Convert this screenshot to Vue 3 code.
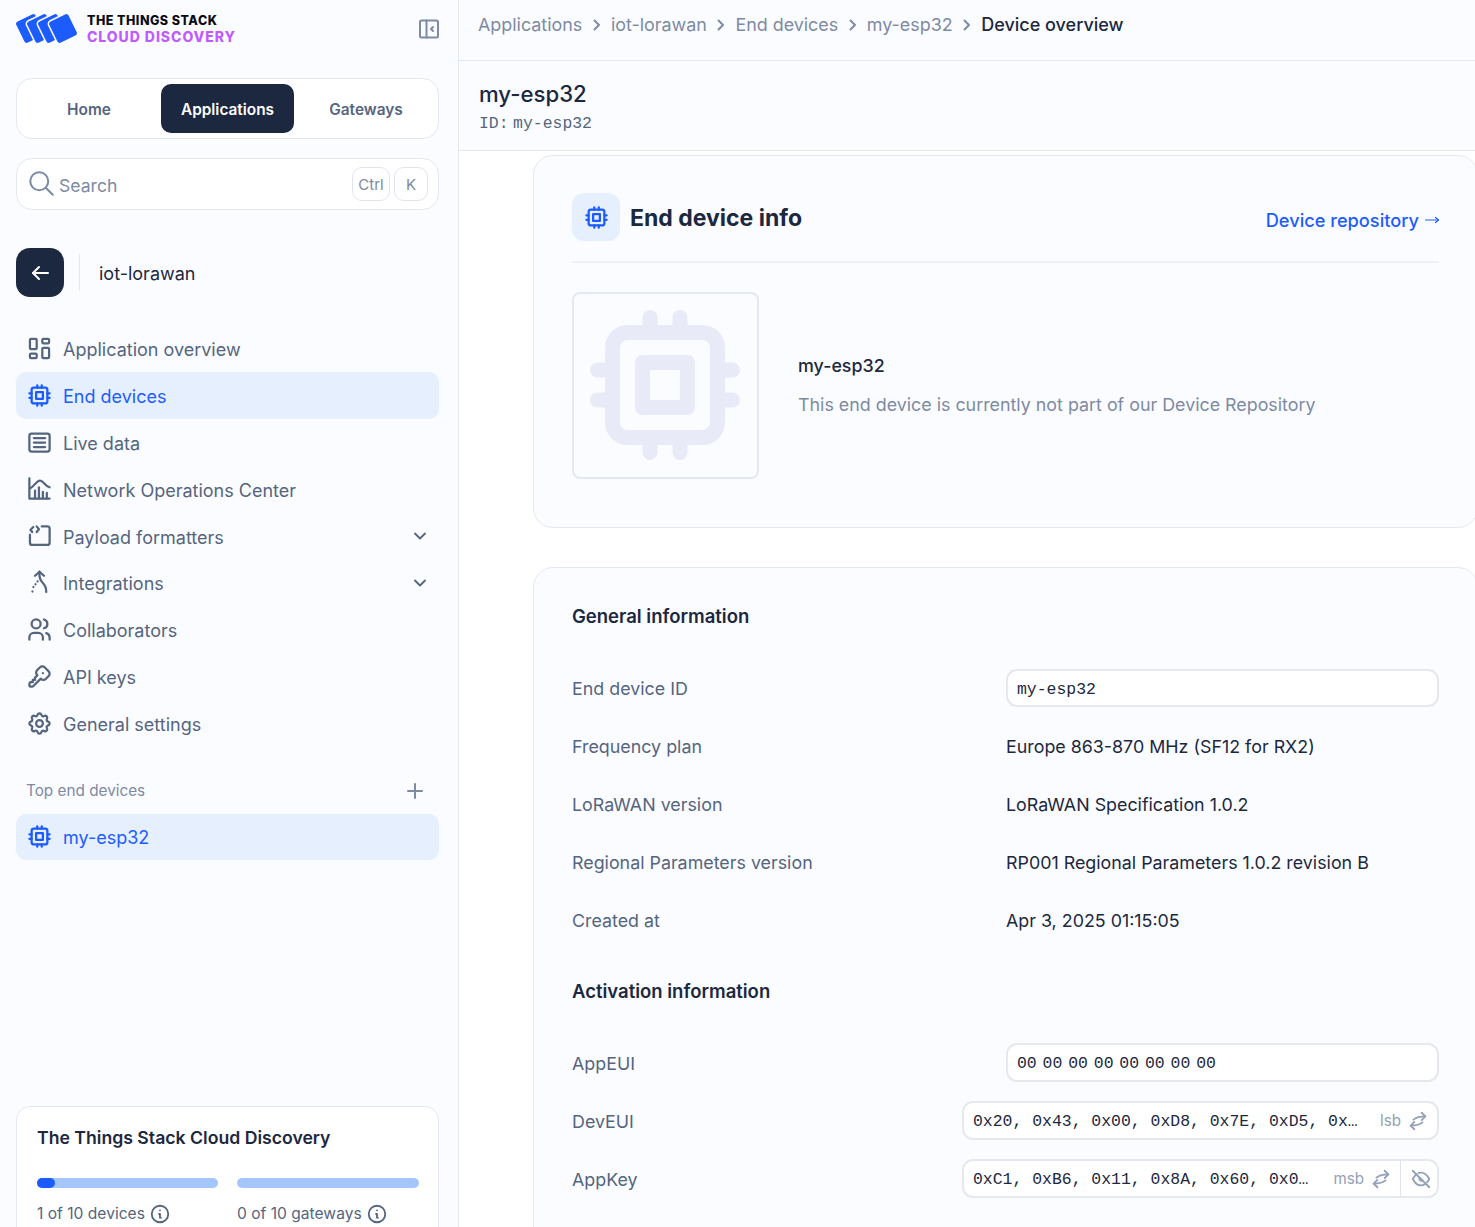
<script setup>
const chip = ['M5 7a2 2 0 0 1 2 -2h10a2 2 0 0 1 2 2v10a2 2 0 0 1 -2 2h-10a2 2 0 0 1 -2 -2z', 'M9 9h6v6h-6z', 'M3 10h2', 'M3 14h2', 'M10 3v2', 'M14 3v2', 'M21 10h-2', 'M21 14h-2', 'M14 21v-2', 'M10 21v-2']

const navItems = [
  { label: 'Application overview', icon: ['M4.500 3.500h4a1 1 0 0 1 1 1v7a1 1 0 0 1 -1 1h-4a1 1 0 0 1 -1 -1v-7a1 1 0 0 1 1 -1', 'M4.500 16.500h4a1 1 0 0 1 1 1v2a1 1 0 0 1 -1 1h-4a1 1 0 0 1 -1 -1v-2a1 1 0 0 1 1 -1', 'M15.500 11.500h4a1 1 0 0 1 1 1v7a1 1 0 0 1 -1 1h-4a1 1 0 0 1 -1 -1v-7a1 1 0 0 1 1 -1', 'M15.500 3.500h4a1 1 0 0 1 1 1v2a1 1 0 0 1 -1 1h-4a1 1 0 0 1 -1 -1v-2a1 1 0 0 1 1 -1'] },
  { label: 'End devices', icon: chip, active: true },
  { label: 'Live data', icon: ['M5 4h14a2 2 0 0 1 2 2v12a2 2 0 0 1 -2 2h-14a2 2 0 0 1 -2 -2v-12a2 2 0 0 1 2 -2', 'M7 8h10', 'M7 12h10', 'M7 16h10'] },
  { label: 'Network Operations Center', icon: ['M3 2v18h18', 'M3.500 11c3.500 -1 5.500 -7 9 -7c3 0 4 5 8.500 6', 'M8 20v-7', 'M11.500 20v-10', 'M15 20v-6', 'M18.500 20v-5'] },
  { label: 'Payload formatters', icon: ['M14 3h5a2 2 0 0 1 2 2v12.500a2 2 0 0 1 -2 2h-13.500a2 2 0 0 1 -2 -2v-7', 'M6.500 3.500l-2.500 2.500l1.500 2', 'M9.500 3l2 2.500l-2 2.500'], chevron: true },
  { label: 'Integrations', icon: ['M12 2.500l-4 3.500', 'M12 2.500l4 3.500', 'M12 3c-.5 5 .5 7 3 9.500c1.500 1.500 3 4 3 8', 'M10.300 11l-.01 .01', 'M8.500 13.500l-.01 .01', 'M6.600 16l-.01 .01', 'M5.700 20l-.01 .01'], chevron: true },
  { label: 'Collaborators', icon: ['M5 7a4 4 0 1 0 8 0a4 4 0 1 0 -8 0', 'M3 21v-2a4 4 0 0 1 4 -4h4a4 4 0 0 1 4 4v2', 'M16 3.130a4 4 0 0 1 0 7.750', 'M21 21v-2a4 4 0 0 0 -3 -3.850'] },
  { label: 'API keys', icon: ['M16.555 3.843l3.602 3.602a2.877 2.877 0 0 1 0 4.069l-2.643 2.643a2.877 2.877 0 0 1 -4.069 0l-.301 -.301l-6.558 6.558a2 2 0 0 1 -1.239 .578l-.175 .008h-1.172a1 1 0 0 1 -.993 -.883l-.007 -.117v-1.172a2 2 0 0 1 .467 -1.284l.119 -.13l.414 -.414h2v-2h2v-2l2.144 -2.144l-.301 -.301a2.877 2.877 0 0 1 0 -4.069l2.643 -2.643a2.877 2.877 0 0 1 4.069 0z', 'M15 9h.01'] },
  { label: 'General settings', icon: ['M10.325 4.317c.426 -1.756 2.924 -1.756 3.35 0a1.724 1.724 0 0 0 2.573 1.066c1.543 -.94 3.31 .826 2.37 2.37a1.724 1.724 0 0 0 1.065 2.572c1.756 .426 1.756 2.924 0 3.35a1.724 1.724 0 0 0 -1.066 2.573c.94 1.543 -.826 3.31 -2.37 2.37a1.724 1.724 0 0 0 -2.572 1.065c-.426 1.756 -2.924 1.756 -3.35 0a1.724 1.724 0 0 0 -2.573 -1.066c-1.543 .94 -3.31 -.826 -2.37 -2.370a1.724 1.724 0 0 0 -1.065 -2.572c-1.756 -.426 -1.756 -2.924 0 -3.35a1.724 1.724 0 0 0 1.066 -2.573c-.94 -1.543 .826 -3.31 2.37 -2.37c1 .608 2.296 .07 2.572 -1.065z', 'M9 12a3 3 0 1 0 6 0a3 3 0 0 0 -6 0'] }
]

const crumbs = ['Applications', 'iot-lorawan', 'End devices', 'my-esp32']

const generalRows = [
  { label: 'Frequency plan', value: 'Europe 863-870 MHz (SF12 for RX2)' },
  { label: 'LoRaWAN version', value: 'LoRaWAN Specification 1.0.2' },
  { label: 'Regional Parameters version', value: 'RP001 Regional Parameters 1.0.2 revision B' },
  { label: 'Created at', value: 'Apr 3, 2025 01:15:05' }
]

const swap = ['M7 10.500c3 -2.500 7 -3.500 13 -3.500', 'M16 3l4 4l-4 4', 'M17 13.500c-3 2.500 -7 3.500 -13 3.500', 'M8 13l-4 4l4 4']
const info = ['M3 12a9 9 0 1 0 18 0a9 9 0 0 0 -18 0', 'M12 8h.01', 'M11 12h1v4h1']
</script>

<template>
  <div class="page">
    <aside class="sidebar">
      <div class="brand">
        <svg class="logo" viewBox="0 0 64 30" width="64" height="30">
          <rect v-for="x in [2.500, 13.500, 24.500, 35.500]" :key="x" :x="x" y="3" width="23" height="25" rx="3.500" fill="#1c5cff" stroke="#fbfcff" stroke-width="1.500" :transform="`rotate(-26 ${x + 11.500} 15.500)`" />
        </svg>
        <div class="brand-text">
          <div class="brand-top">THE THINGS STACK</div>
          <div class="brand-bottom">CLOUD DISCOVERY</div>
        </div>
        <svg class="collapse" viewBox="0 0 20 20" width="20" height="20">
          <rect x="1" y="1.500" width="18" height="17" rx="1.500" />
          <path d="M7.500 1.500v17" />
          <path d="M14 8l-2 2l2 2" />
        </svg>
      </div>

      <div class="tabs">
        <div class="tab tab-home">Home</div>
        <div class="tab tab-active">Applications</div>
        <div class="tab tab-gateways">Gateways</div>
      </div>

      <div class="search">
        <svg viewBox="0 0 24 24" width="27" height="27" class="search-icon">
          <circle cx="10" cy="10" r="8" />
          <path d="M16 16l6 6" />
        </svg>
        <span class="search-text">Search</span>
        <span class="kbd kbd-ctrl">Ctrl</span>
        <span class="kbd kbd-k">K</span>
      </div>

      <div class="back-row">
        <div class="back-btn">
          <svg viewBox="0 0 24 24" width="24" height="24">
            <path d="M20 12h-15" />
            <path d="M11 6l-6 6l6 6" />
          </svg>
        </div>
        <div class="back-sep"></div>
        <span class="back-name">iot-lorawan</span>
      </div>

      <nav class="nav">
        <div v-for="item in navItems" :key="item.label" class="nav-item" :class="{ active: item.active }">
          <svg class="icon" viewBox="0 0 24 24" width="27" height="27">
            <path v-for="d in item.icon" :key="d" :d="d" />
          </svg>
          <span class="nav-label">{{ item.label }}</span>
          <svg v-if="item.chevron" class="chevron" viewBox="0 0 16 16" width="16" height="16">
            <path d="M3 5.500l5 5l5 -5" />
          </svg>
        </div>
      </nav>

      <div class="top-head">
        <span>Top end devices</span>
        <svg viewBox="0 0 18 18" width="18" height="18">
          <path d="M9 2v14M2 9h14" />
        </svg>
      </div>
      <div class="nav-item nav-top active">
        <svg class="icon" viewBox="0 0 24 24" width="27" height="27">
          <path v-for="d in chip" :key="d" :d="d" />
        </svg>
        <span class="nav-label">my-esp32</span>
      </div>

      <div class="usage">
        <h3>The Things Stack Cloud Discovery</h3>
        <div class="usage-grid">
          <div>
            <div class="bar"><div class="bar-fill" style="width: 10%"></div></div>
            <div class="usage-text">1 of 10 devices
              <svg viewBox="0 0 24 24" width="22" height="22"><path v-for="d in info" :key="d" :d="d" /></svg>
            </div>
          </div>
          <div>
            <div class="bar"></div>
            <div class="usage-text">0 of 10 gateways
              <svg viewBox="0 0 24 24" width="22" height="22"><path v-for="d in info" :key="d" :d="d" /></svg>
            </div>
          </div>
        </div>
      </div>
    </aside>

    <main class="main">
      <div class="breadcrumbs">
        <template v-for="c in crumbs" :key="c">
          <span>{{ c }}</span>
          <svg viewBox="0 0 10 12" width="10" height="12"><path d="M2.500 1.500l4.500 4.500l-4.500 4.500" /></svg>
        </template>
        <span class="crumb-current">Device overview</span>
      </div>

      <div class="page-title">
        <h1>my-esp32</h1>
        <div class="page-id">ID: my-esp32</div>
      </div>

      <div class="content">
        <section class="card">
          <div class="card-head">
            <div class="chip-badge">
              <svg class="icon" viewBox="0 0 24 24" width="27" height="27">
                <path v-for="d in chip" :key="d" :d="d" />
              </svg>
            </div>
            <h2>End device info</h2>
            <a class="repo-link">Device repository
              <svg class="arrow" viewBox="0 0 14 10" width="14" height="10">
                <path d="M0.500 5h13" />
                <path d="M10.500 2.500l3 2.500l-3 2.500" />
              </svg>
            </a>
          </div>
          <div class="device-row">
            <div class="device-thumb">
              <svg viewBox="0 0 24 24" width="180" height="180">
                <path v-for="d in chip" :key="d" :d="d" />
              </svg>
            </div>
            <div class="device-copy">
              <div class="device-name">my-esp32</div>
              <div class="device-note">This end device is currently not part of our Device Repository</div>
            </div>
          </div>
        </section>

        <section class="card card-info">
          <h3>General information</h3>
          <div class="rows">
            <div class="row row-input">
              <span class="row-label">End device ID</span>
              <div class="field field-wide"><span class="mono">my-esp32</span></div>
            </div>
            <div v-for="r in generalRows" :key="r.label" class="row row-plain">
              <span class="row-label">{{ r.label }}</span>
              <span class="row-value">{{ r.value }}</span>
            </div>
          </div>

          <h3 class="activation">Activation information</h3>
          <div class="rows rows-activation">
            <div class="row row-input">
              <span class="row-label">AppEUI</span>
              <div class="field field-wide"><span class="mono zeros">00 00 00 00 00 00 00 00</span></div>
            </div>
            <div class="row row-input">
              <span class="row-label">DevEUI</span>
              <div class="field field-long">
                <span class="mono">0x20, 0x43, 0x00, 0xD8, 0x7E, 0xD5, 0x…</span>
                <span class="order">lsb</span>
                <svg class="swap" viewBox="0 0 24 24" width="22" height="22"><path v-for="d in swap" :key="d" :d="d" /></svg>
              </div>
            </div>
            <div class="row row-input">
              <span class="row-label">AppKey</span>
              <div class="field field-long">
                <span class="mono">0xC1, 0xB6, 0x11, 0x8A, 0x60, 0x0…</span>
                <span class="order">msb</span>
                <svg class="swap" viewBox="0 0 24 24" width="22" height="22"><path v-for="d in swap" :key="d" :d="d" /></svg>
                <div class="eye-box">
                  <svg class="swap" viewBox="0 0 24 24" width="22" height="22">
                    <path d="M3 3l18 18" />
                    <path d="M10.600 10.600a2 2 0 0 0 2.800 2.800" />
                    <path d="M9.400 5.400a9.700 9.700 0 0 1 2.600 -.400c3.600 0 6.600 2.300 9 7c-.7 1.400 -1.500 2.600 -2.400 3.600m-2.200 1.900c-1.400 .9 -3 1.500 -4.400 1.500c-3.600 0 -6.600 -2.300 -9 -7c1.200 -2.400 2.600 -4.200 4.300 -5.400" />
                  </svg>
                </div>
              </div>
            </div>
          </div>
        </section>
      </div>
    </main>
  </div>
</template>

<style>
html, body {
  margin: 0;
  background: #fff;
}
</style>

<style scoped>
.page {
  display: flex;
  height: 1227px;
  width: 1475px;
  overflow: hidden;
  font-family: Inter, "Noto Sans", sans-serif;
  font-size: 18px;
  color: #1c2840;
  box-sizing: border-box;
}

svg {
  fill: none;
  stroke: currentColor;
  stroke-width: 2;
  stroke-linecap: round;
  stroke-linejoin: round;
  flex-shrink: 0;
}

.sidebar {
  width: 459px;
  flex-shrink: 0;
  box-sizing: border-box;
  padding: 0 19px 0 16px;
  background: #fbfcff;
  border-right: 1px solid #e4e8f0;
}

.brand {
  display: flex;
  align-items: center;
  height: 58px;
  margin-bottom: 20px;
}

.logo {
  margin-right: 7px;
  margin-top: -2px;
}

.brand-text {
  font-weight: 800;
  line-height: 16px;
  margin-top: -1px;
}

.brand-top {
  font-size: 12.500px;
  color: #0a0a14;
  letter-spacing: 0.480px;
}

.brand-bottom {
  font-size: 14px;
  color: #c05cff;
  letter-spacing: 0.950px;
}

.collapse {
  margin-left: auto;
  color: #7d8aa3;
}

.tabs {
  display: flex;
  align-items: center;
  height: 61px;
  box-sizing: border-box;
  padding: 5px;
  background: #fff;
  border: 1px solid #e4e8f0;
  border-radius: 16px;
  margin-bottom: 19px;
}

.tab {
  font-size: 15.400px;
  font-weight: 600;
  color: #55657f;
  text-align: center;
  line-height: 51px;
  height: 49px;
}

.tab-home {
  width: 134px;
  padding-right: 5px;
}

.tab-active {
  width: 133px;
  background: #1c2840;
  color: #fff;
  border-radius: 10px;
}

.tab-gateways {
  flex: 1;
  padding-left: 5px;
}

.search {
  display: flex;
  align-items: center;
  height: 52px;
  box-sizing: border-box;
  padding: 0 10px 0 11px;
  background: #fff;
  border: 1px solid #e4e8f0;
  border-radius: 16px;
  color: #7d8aa3;
  margin-bottom: 38px;
}

.search-icon {
  stroke-width: 1.800;
  margin-top: -2px;
}

.search-text {
  margin-left: 4px;
  flex: 1;
  font-size: 17.600px;
  padding-top: 2px;
}

.kbd {
  display: flex;
  align-items: center;
  justify-content: center;
  height: 34px;
  box-sizing: border-box;
  border: 1px solid #e0e4ee;
  border-radius: 10px;
  font-size: 15px;
}

.kbd-ctrl {
  width: 38px;
  margin-right: 4px;
}

.kbd-k {
  width: 34px;
}

.back-row {
  display: flex;
  align-items: center;
  height: 49px;
  margin-bottom: 28.500px;
}

.back-btn {
  width: 48px;
  height: 49px;
  border-radius: 14px;
  background: #1c2840;
  color: #fff;
  display: flex;
  align-items: center;
  justify-content: center;
}

.back-sep {
  width: 1px;
  height: 37px;
  background: #e4e8f0;
  margin: 0 19px 0 15px;
}

.back-name {
  padding-top: 1px;
}

.nav-item {
  display: flex;
  align-items: center;
  height: 46.800px;
  box-sizing: border-box;
  padding: 0 11px 0 10px;
  border-radius: 10px;
  color: #55657f;
}

.nav-item .icon {
  margin-right: 10px;
}

.nav-label {
  padding-top: 2px;
}

.nav-item.active {
  background: #e6effe;
  color: #1c5cff;
}

.nav-top {
  height: 46px;
}

.chevron {
  margin-left: auto;
  stroke-width: 1.800;
}

.top-head {
  display: flex;
  align-items: center;
  justify-content: space-between;
  padding: 0 15px 0 10px;
  margin-top: 32px;
  margin-bottom: 11px;
  font-size: 15.300px;
  color: #7d8aa3;
  height: 24px;
}

.usage {
  margin-top: 246px;
  height: 200px;
  box-sizing: border-box;
  padding: 19px 20px;
  background: #fff;
  border: 1px solid #e4e8f0;
  border-radius: 14px;
}

.usage h3 {
  margin: 0 0 28px;
  font-size: 17.650px;
  font-weight: 600;
  line-height: 24px;
}

.usage-grid {
  display: grid;
  grid-template-columns: 181px 182px;
  gap: 19px;
}

.bar {
  height: 10px;
  border-radius: 5px;
  background: #a5c6fd;
}

.bar-fill {
  height: 100%;
  border-radius: 5px;
  background: #1c5cff;
}

.usage-text {
  display: flex;
  align-items: center;
  gap: 4px;
  margin-top: 15px;
  font-size: 15.600px;
  color: #55657f;
  white-space: nowrap;
}

.main {
  flex: 1;
  min-width: 0;
  background: #fff;
}

.breadcrumbs {
  display: flex;
  align-items: center;
  gap: 9.300px;
  height: 61px;
  box-sizing: border-box;
  padding: 0 0 11px 19px;
  background: #fbfcff;
  border-bottom: 1px solid #e4e8f0;
  color: #7d8aa3;
  font-size: 17.900px;
}

.crumb-current {
  color: #1c2840;
  font-weight: 500;
  font-size: 18px;
}

.page-title {
  box-sizing: border-box;
  height: 90px;
  padding: 19px 0 0 20px;
  background: #fbfcff;
  border-bottom: 1px solid #e4e8f0;
}

.page-title h1 {
  margin: 0;
  font-size: 22.200px;
  font-weight: 500;
  line-height: 28px;
}

.page-id {
  font-family: "Liberation Mono", monospace;
  font-size: 16.450px;
  line-height: 18px;
  color: #55657f;
  margin-top: 7px;
  word-spacing: -5.400px;
}

.content {
  padding: 4px 0 0 74px;
  width: 945px;
}

.card {
  box-sizing: border-box;
  background: #fbfcff;
  border: 1px solid #e4e8f0;
  border-radius: 20px;
  padding: 0 38px;
  font-size: 17.850px;
}

.card-head {
  display: flex;
  align-items: center;
  box-sizing: border-box;
  height: 107px;
  border-bottom: 2px solid #eef0f5;
  padding-top: 17px;
}

.chip-badge {
  width: 48px;
  height: 48px;
  border-radius: 12px;
  background: #e6effe;
  color: #1c5cff;
  display: flex;
  align-items: center;
  justify-content: center;
  margin-right: 10px;
}

.card-head h2 {
  margin: 0;
  padding-top: 2px;
  font-size: 23px;
  font-weight: 700;
}

.repo-link {
  display: flex;
  align-items: center;
  gap: 6px;
  margin-left: auto;
  padding-top: 5px;
  color: #1c5cff;
  font-weight: 500;
  font-size: 18.200px;
}

.arrow {
  stroke-width: 1.200;
  margin-top: 1px;
}

.device-row {
  display: flex;
  align-items: center;
  padding: 29px 0 48px;
}

.device-thumb {
  width: 187px;
  height: 187px;
  box-sizing: border-box;
  border: 2px solid #e4e8f0;
  border-radius: 8px;
  display: flex;
  align-items: center;
  justify-content: center;
  color: #e8eaf7;
}

.device-thumb svg {
  margin: -1px 0 0 -1px;
}

.device-copy {
  margin-left: 39px;
}

.device-name {
  font-weight: 500;
  margin-bottom: 18px;
  margin-top: -2px;
}

.device-note {
  color: #7d8aa3;
}

.card-info {
  margin-top: 39px;
  padding-top: 35px;
  height: 800px;
}

.card-info h3 {
  margin: 0;
  font-size: 18.500px;
  font-weight: 600;
  line-height: 26px;
}

.card-info .activation {
  margin-top: 29px;
}

.rows {
  margin-top: 30px;
}

.row {
  display: flex;
  align-items: center;
  justify-content: space-between;
  height: 57.900px;
}

.row-input {
  height: 58px;
}

.row-plain {
  padding-top: 1px;
  box-sizing: border-box;
}

.rows-activation .row-label {
  padding-top: 1px;
}

.row-label {
  color: #55657f;
}

.row-value {
  width: 433px;
  white-space: nowrap;
}

.field {
  display: flex;
  align-items: center;
  box-sizing: border-box;
  height: 38.500px;
  background: #fff;
  border: 2px solid #e6e8f0;
  border-radius: 11px;
  padding-left: 9px;
}

.field-wide {
  width: 433px;
}

.field-long {
  width: 477px;
}

.mono {
  font-family: "Liberation Mono", monospace;
  font-size: 16.450px;
  white-space: nowrap;
  padding-top: 2px;
}

.zeros {
  word-spacing: -4px;
}

.order {
  margin-left: auto;
  margin-right: 6px;
  font-size: 15.200px;
  color: #94a0b8;
}

.swap {
  color: #94a0b8;
  margin-right: 8px;
}

.eye-box {
  display: flex;
  align-items: center;
  height: 100%;
  padding-left: 9px;
  border-left: 1px solid #e0e4ee;
}

.eye-box .swap {
  margin-right: 5px;
}
</style>
